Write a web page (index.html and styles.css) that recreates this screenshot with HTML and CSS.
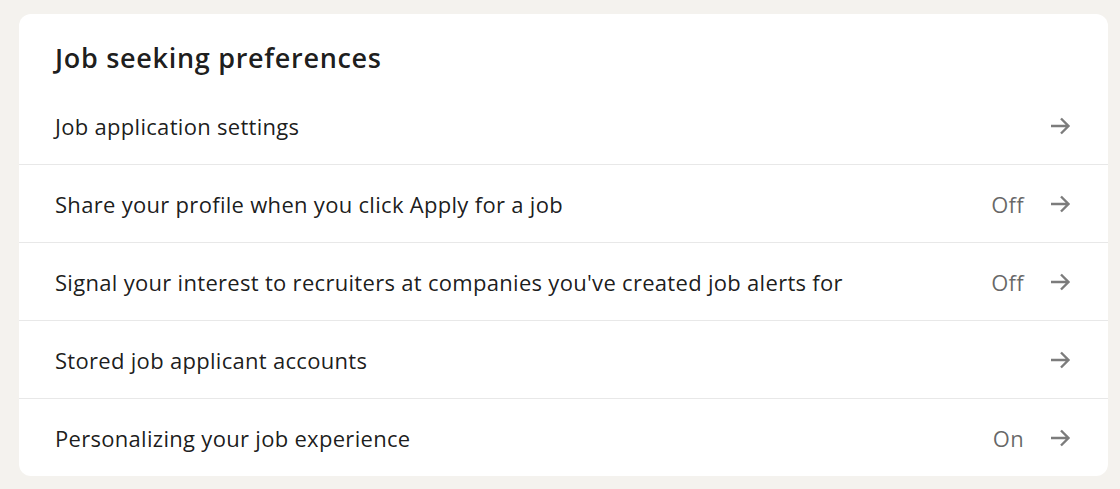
FILE: index.html
```html
<!DOCTYPE html>
<html lang="en">
<head>
<meta charset="utf-8">
<link rel="stylesheet" href="styles.css">
</head>
<body>
<section class="card">
  <h2 class="title">Job seeking preferences</h2>
  <ul class="list">
    <li class="row"><span class="label">Job application settings</span><span class="meta"><svg class="arrow" viewBox="0 0 24 24"><path d="M3 12h18M13 4.5l7.5 7.5-7.5 7.5"/></svg></span></li>
    <li class="row"><span class="label">Share your profile when you click Apply for a job</span><span class="meta"><span class="state">Off</span><svg class="arrow" viewBox="0 0 24 24"><path d="M3 12h18M13 4.5l7.5 7.5-7.5 7.5"/></svg></span></li>
    <li class="row"><span class="label">Signal your interest to recruiters at companies you've created job alerts for</span><span class="meta"><span class="state">Off</span><svg class="arrow" viewBox="0 0 24 24"><path d="M3 12h18M13 4.5l7.5 7.5-7.5 7.5"/></svg></span></li>
    <li class="row"><span class="label">Stored job applicant accounts</span><span class="meta"><svg class="arrow" viewBox="0 0 24 24"><path d="M3 12h18M13 4.5l7.5 7.5-7.5 7.5"/></svg></span></li>
    <li class="row"><span class="label">Personalizing your job experience</span><span class="meta"><span class="state">On</span><svg class="arrow" viewBox="0 0 24 24"><path d="M3 12h18M13 4.5l7.5 7.5-7.5 7.5"/></svg></span></li>
  </ul>
</section>
</body>
</html>
```

FILE: styles.css
```css
* { box-sizing: border-box; }
html, body { margin: 0; padding: 0; }
body {
  background: #f4f2ee;
  font-family: "Open Sans", "Noto Sans", sans-serif;
  color: rgba(0,0,0,0.9);
  padding: 14px 12px 0 19px;
}
.card {
  background: #fff;
  border-radius: 12px;
  width: 1089px;
  padding-top: 26px;
  overflow: hidden;
}
.title {
  margin: 0 0 11px 0;
  padding: 0 36px;
  font-size: 27px;
  line-height: 36px;
  font-weight: 600;
  letter-spacing: 0.7px;
}
.list { list-style: none; margin: 0; padding: 0; }
.row {
  display: flex;
  align-items: center;
  justify-content: space-between;
  height: 77px;
  padding: 0 36px 0 36px;
  font-size: 22px;
  letter-spacing: 0.3px;
}
.row + .row { border-top: 1px solid #e8e8e8; height: 78px; }
.meta { display: flex; align-items: center; gap: 24px; }
.state { color: rgba(0,0,0,0.6); }
.arrow { width: 24px; height: 24px; fill: none; stroke: #7c7c7c; stroke-width: 2.4; }
```
